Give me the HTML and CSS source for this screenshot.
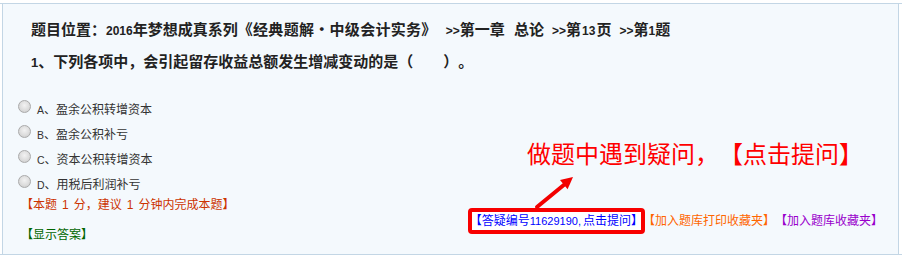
FILE: index.html
```html
<!DOCTYPE html>
<html lang="zh-CN">
<head>
<meta charset="utf-8">
<title>题目</title>
<link rel="stylesheet" href="styles.css">
</head>
<body>
<div class="frame">
  <div class="panel">
    <div class="title">题目位置：<span class="t-lat">2016</span>年梦想成真系列<span class="book">《经典题解·中级会计实务》</span><span class="t-lat gap1">&gt;&gt;</span>第一章<span class="t-lat sp"> </span>总论<span class="t-lat gap">&gt;&gt;</span>第<span class="t-lat dg">13</span>页<span class="t-lat gap">&gt;&gt;</span>第<span class="t-lat">1</span>题</div>
    <div class="question"><span class="q-lat">1</span>、下列各项中，会引起留存收益总额发生增减变动的是（<span class="q-gap"></span>）。</div>
    <div class="body">
      <div class="left">
        <ul class="options">
          <li class="option"><span class="radio"></span><span class="opt-text"><span class="o-lat">A</span>、盈余公积转增资本</span></li>
          <li class="option"><span class="radio"></span><span class="opt-text"><span class="o-lat">B</span>、盈余公积补亏</span></li>
          <li class="option"><span class="radio"></span><span class="opt-text"><span class="o-lat">C</span>、资本公积转增资本</span></li>
          <li class="option"><span class="radio"></span><span class="opt-text"><span class="o-lat">D</span>、用税后利润补亏</span></li>
        </ul>
        <div class="score">【本题<span class="num">1</span>分，建议<span class="num">1</span>分钟内完成本题】</div>
        <div class="answer">【显示答案】</div>
      </div>
      <div class="links">
        <a class="link ask">【答疑编号<span class="digits">11629190,</span>点击提问】</a><a class="link print">【加入题库打印收藏夹】</a><a class="link fav">【加入题库收藏夹】</a>
      </div>
    </div>
    <div class="callout">做题中遇到疑问，【点击提问】</div>
    <svg class="arrow" width="50" height="46" viewBox="0 0 50 46">
      <line x1="7" y1="37" x2="35" y2="14" stroke="#f20000" stroke-width="4" stroke-linecap="round"/>
      <polygon points="43,7 37.6,19.3 30,10.1" fill="#f20000"/>
    </svg>
  </div>
</div>
</body>
</html>
```
FILE: styles.css
```css
body {
  margin: 0;
  background: #ffffff;
  font-family: "Noto Sans CJK SC", sans-serif;
  color: #333333;
  text-spacing-trim: space-all;
}

.frame {
  margin-top: 3px;
  border-top: 1px solid #c3d6e5;
  border-bottom: 1px solid #c3d6e5;
}

.panel {
  position: relative;
  margin: 0 3px 0 2px;
  border-left: 1px solid #c3d6e5;
  border-right: 1px solid #c3d6e5;
  background: #f4f9fd;
  padding: 15px 15px 12px 0;
}

.title {
  margin-left: 28px;
  font-size: 15px;
  line-height: 20px;
  font-weight: bold;
  color: #222222;
  white-space: nowrap;
}

.book {
  letter-spacing: 0.3px;
}

.t-lat {
  font-family: "Liberation Sans", sans-serif;
  font-size: 12px;
  line-height: 1;
  font-weight: bold;
}

.t-lat.gap1 {
  padding: 0 0 0 9px;
}

.t-lat.gap {
  padding: 0 0 0 8px;
}

.t-lat.sp {
  padding-left: 6px;
}

.t-lat.dg {
  padding: 0 1px;
}

.question {
  margin-top: 12px;
  margin-left: 28px;
  font-size: 15px;
  line-height: 20px;
  font-weight: bold;
  color: #222222;
  white-space: nowrap;
}

.q-lat {
  font-family: "Liberation Sans", sans-serif;
  font-size: 13px;
  line-height: 1;
  font-weight: bold;
}

.q-gap {
  display: inline-block;
  width: 30px;
}

.body {
  display: flex;
  margin-top: 25px;
}

.options {
  list-style: none;
  margin: 0;
  padding: 0 0 0 15px;
}

.option {
  display: flex;
  align-items: center;
  height: 25px;
  font-size: 12px;
}

.radio {
  width: 13px;
  height: 13px;
  box-sizing: border-box;
  border-radius: 50%;
  border: 1px solid #aaaaaa;
  background: radial-gradient(circle at 50% 40%, #f2f2f2 0%, #dddddd 55%, #c8c8c8 100%);
  margin-right: 6px;
  margin-bottom: 4px;
}

.opt-text {
  line-height: 16px;
  color: #333333;
}

.o-lat {
  font-family: "Liberation Sans", sans-serif;
  font-size: 10.5px;
  line-height: 1;
}

.num {
  font-family: "Liberation Sans", sans-serif;
  font-size: 12px;
  line-height: 1;
  padding: 0 5px;
}

.digits {
  font-family: "Liberation Sans", sans-serif;
  font-size: 11px;
  line-height: 1;
  padding-right: 2px;
}

.score {
  margin-left: 18px;
  font-size: 12px;
  line-height: 16px;
  color: #cc3300;
  white-space: nowrap;
}

.answer {
  margin-top: 14px;
  margin-left: 18px;
  font-size: 12px;
  line-height: 16px;
  color: #006600;
}

.links {
  display: flex;
  margin-left: auto;
  align-self: flex-end;
  margin-bottom: 14px;
  font-size: 12px;
  line-height: 16px;
  white-space: nowrap;
}

.link {
  display: inline-block;
  text-decoration: none;
}

.ask {
  position: relative;
  z-index: 0;
  color: #0000ff;
}

.ask::before {
  content: "";
  position: absolute;
  left: -2px;
  right: -2px;
  top: -4px;
  bottom: -6px;
  border: 4px solid #f80000;
  border-radius: 4px;
  background: #ffffff;
  z-index: -1;
}

.print {
  color: #ff6600;
}

.fav {
  color: #9900cc;
}

.callout {
  position: absolute;
  left: 524px;
  top: 137px;
  font-size: 24px;
  line-height: 24px;
  color: #ff0000;
  white-space: nowrap;
}

.arrow {
  position: absolute;
  left: 527px;
  top: 166px;
}
```
